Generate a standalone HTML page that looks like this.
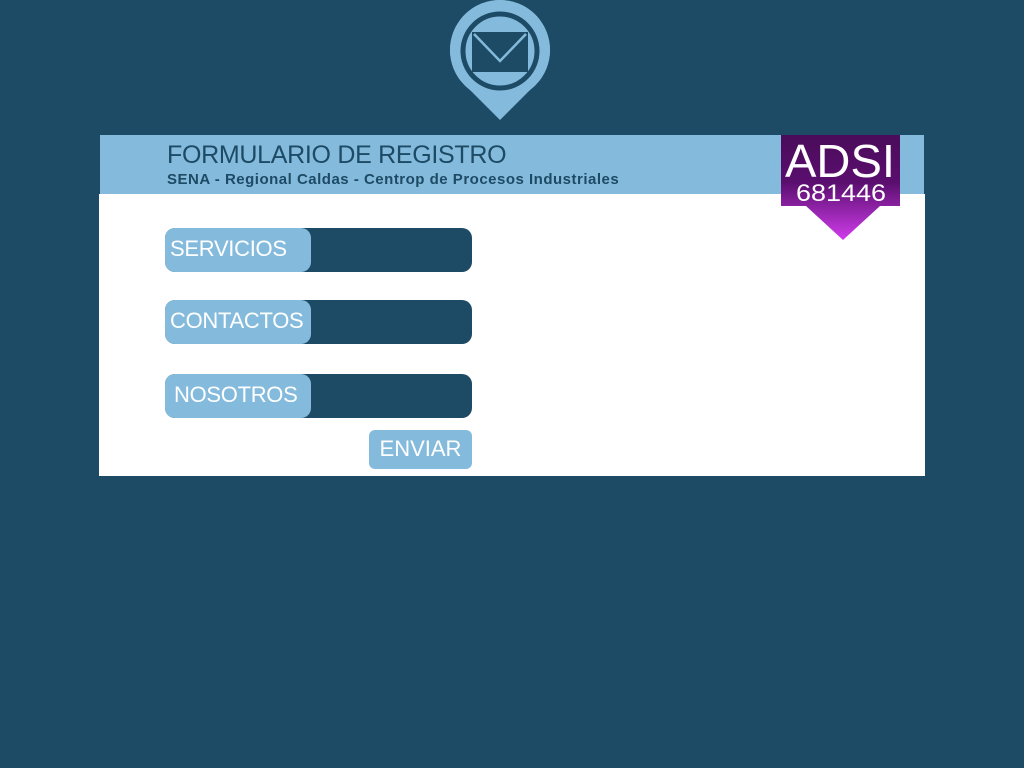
<!DOCTYPE html>
<html><head><style>
body{margin:0;width:1024px;height:768px;background:#1d4a64;position:relative;overflow:hidden;font-family:"Liberation Sans",sans-serif}
.panel{position:absolute;left:99px;top:194px;width:826px;height:282px;background:#fff}
.head{position:absolute;left:100px;top:135px;width:824px;height:59px;background:#84bbdc}
.t1{position:absolute;left:167px;top:141px;font-size:25px;color:#1d4a64;letter-spacing:-0.3px}
.t2{position:absolute;left:167px;top:171px;font-size:15px;font-weight:bold;color:#1d4a64;letter-spacing:0.5px}
.f{position:absolute;left:165px;width:307px;height:44px;background:#1d4a64;border-radius:10px}
.f span{position:absolute;left:0;top:0;width:146px;height:44px;background:#84bbdc;border-radius:10px;color:#fff;font-size:22px;line-height:42px;box-sizing:border-box;padding-left:5px;letter-spacing:-0.3px}
.btn{position:absolute;left:369px;top:430px;width:103px;height:39px;background:#84bbdc;border-radius:6px;color:#fff;font-size:22px;line-height:38px;text-align:center}
</style></head><body>
<svg style="position:absolute;left:440px;top:0" width="120" height="125" viewBox="440 0 120 125">
<path d="M460 80 A50 50 0 1 1 540 80 L500 120 Z" fill="#84bbdc"/>
<circle cx="500" cy="50" r="50" fill="#84bbdc"/>
<circle cx="500" cy="51" r="37" fill="none" stroke="#1d4a64" stroke-width="5"/>
<rect x="472" y="32" width="56" height="40" fill="#1d4a64"/>
<path d="M474 34 L500 61 L526 34" fill="none" stroke="#84bbdc" stroke-width="2.5"/>
</svg>
<div class="panel"></div>
<div class="head"></div>
<div class="t1">FORMULARIO DE REGISTRO</div>
<div class="t2">SENA - Regional Caldas - Centrop de Procesos Industriales</div>
<svg style="position:absolute;left:781px;top:135px" width="120" height="106">
<defs><linearGradient id="g" x1="0" y1="0" x2="0" y2="1"><stop offset="0" stop-color="#4a0c5a"/><stop offset="0.45" stop-color="#5a0e6e"/><stop offset="1" stop-color="#cf3ceb"/></linearGradient></defs>
<path d="M0 0H119V71H99L62 105L25 71H0Z" fill="url(#g)"/>
<text x="4" y="42" textLength="110" lengthAdjust="spacingAndGlyphs" font-family="Liberation Sans" font-size="46" fill="#fff">ADSI</text>
<text x="15" y="66" textLength="90" lengthAdjust="spacingAndGlyphs" font-family="Liberation Sans" font-size="24" fill="#fff">681446</text>
</svg>
<div class="f" style="top:228px"><span>SERVICIOS</span></div>
<div class="f" style="top:300px"><span>CONTACTOS</span></div>
<div class="f" style="top:374px"><span style="padding-left:9px">NOSOTROS</span></div>
<div class="btn">ENVIAR</div>
</body></html>
